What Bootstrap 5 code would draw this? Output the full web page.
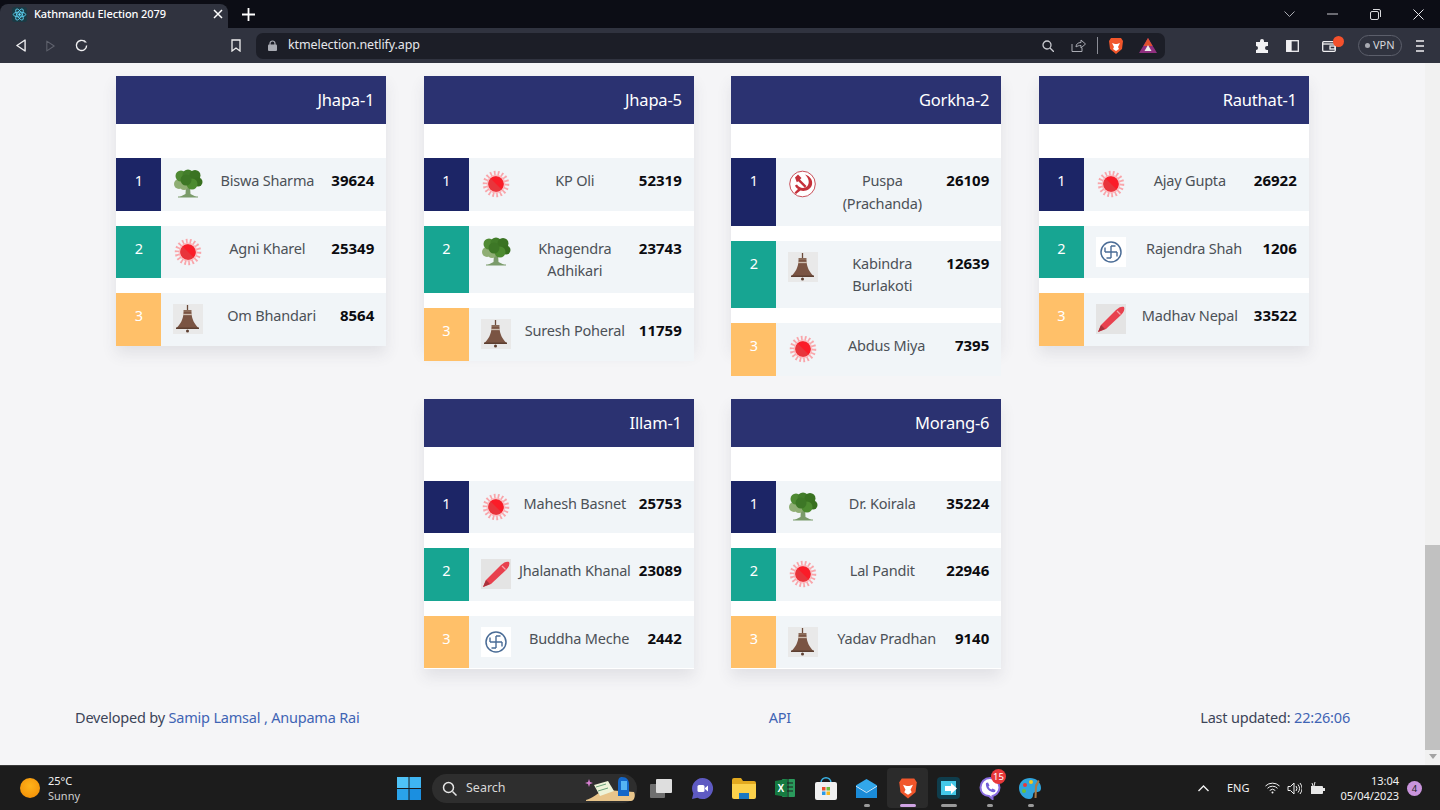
<!DOCTYPE html>
<html lang="en">
<head>
  <meta charset="UTF-8" />
  <meta name="viewport" content="width=device-width, initial-scale=1" />
  <title>Kathmandu Election 2079</title>
  <link href="https://cdn.jsdelivr.net/npm/bootstrap@5.3.3/dist/css/bootstrap.min.css" rel="stylesheet" />
  <style>
    html, body { height: 810px; overflow: hidden; }
    body { font-family: "Noto Sans", "Liberation Sans", sans-serif; font-size: 14.5px; letter-spacing: -.2px; background: #f5f5f7; }
    .win { height: 810px; }

    /* browser chrome */
    .tabbar { height: 28px; background: #0c0d15; color: #fff; }
    .tab-active { width: 228px; height: 24px; margin-top: 4px; padding: 0 5px 4px 12px; background: #30333f; border-radius: 8px 8px 0 0; font-size: 11px; font-weight: 500; letter-spacing: -.1px; }
    .tab-title { margin-left: 7px; }
    .tab-add { margin-left: 14px; }
    .win-btns { margin-left: auto; padding-right: 16px; gap: 32px; }
    .toolbar { height: 35px; background: #30333f; padding-left: 16px; }
    .tb-forward, .tb-reload { margin-left: 20px; }
    .tb-bookmark { margin-left: 143px; }
    .urlbar { width: 909px; height: 26px; margin-left: 15px; padding: 0 8px 0 12px; background: #1c1e27; border-radius: 7px; color: #e6e6ea; font-size: 12.5px; letter-spacing: -.1px; }
    .url-text { margin-left: 11px; }
    .url-share { margin-left: 17px; }
    .url-sep { width: 1px; height: 17px; margin: 0 10px 0 11px; background: #8b8d96; }
    .url-bat { margin-left: 15px; }
    .tb-ext { margin-left: 90px; }
    .tb-side { margin-left: 17px; }
    .tb-wallet { margin-left: 23px; line-height: 0; }
    .wallet-dot { top: -4px; right: -8px; width: 11px; height: 11px; border-radius: 50%; background: #f4512c; }
    .vpn-pill { height: 21px; margin-left: 22px; padding: 0 6px; border: 1px solid #5c5f6b; border-radius: 11px; color: #d6d7dc; font-size: 11px; gap: 3px; letter-spacing: 0; }
    .vpn-dot { width: 5px; height: 5px; border-radius: 50%; background: #a9abb3; }
    .tb-menu { margin-left: 13px; }

    /* page */
    .viewport { height: 702px; min-height: 0; }
    .sheet { min-width: 0; padding-top: 13px; }
    .seat-grid { width: 1193px; gap: 52.5px 37.5px; }
    .seat-box { width: 270px; height: 270px; background: #fff; box-shadow: 0 8px 14px rgba(60, 60, 80, .1); }
    .seat-head { height: 48px; padding: 0 12px; background: #2b3271; color: #fff; font-size: 16.5px; line-height: 48px; text-align: right; margin-bottom: 34px; }
    .cand-row { background: #f1f5f8; margin-bottom: 15px; }
    .cand-rank { width: 45px; flex: none; padding-top: 11.25px; padding-bottom: 11.25px; color: #fff; text-align: center; line-height: 22.5px; }
    .rank-1 { background: #1c2566; }
    .rank-2 { background: #17a592; }
    .rank-3 { background: #ffc069; }
    .cand-sym { width: 30px; height: 30px; flex: none; margin: 11.25px 0 11.25px 12px; }
    .cand-name { flex: 1 1 0; min-width: 0; padding: 11.25px 6px; color: #4c5157; text-align: center; line-height: 22.5px; }
    .cand-votes { flex: none; padding: 11.25px 12px 11.25px 0; color: #0b0b0f; font-size: 15px; font-weight: 700; letter-spacing: 0; line-height: 22.5px; }
    .foot-line { margin-top: 37.5px; padding: 0 75px; color: #3c4458; line-height: 22.5px; }
    .foot-line a { color: #3f64b4; text-decoration: none; }

    .scroll-rail { width: 15px; flex: none; background: #f1f1f1; }
    .scroll-thumb { height: 205px; margin-top: 482px; background: #c1c1c1; }
    .scroll-down { margin: 4px auto 0; width: 0; height: 0; border: 4px solid transparent; border-top: 5px solid #a3a3a3; border-bottom: 0; }

    /* taskbar */
    .taskbar { height: 45px; background: #1c1c1c; border-top: 1px solid #3a3a3a; color: #f2f2f2; letter-spacing: 0; }
    .weather { left: 20px; top: 7px; font-size: 11px; line-height: 15px; }
    .weather-ball { width: 20px; height: 20px; border-radius: 50%; background: radial-gradient(circle at 50% 40%, #ffb31a, #f08a05); margin-right: 8px; }
    .weather-sub { color: #cfcfcf; }
    .task-center { margin-left: 397px; }
    .task-slot { width: 41px; height: 40px; }
    .task-slot.on { background: #2b2b2b; border-radius: 4px; }
    .task-mark { bottom: 1px; left: 50%; width: 6px; height: 3px; margin-left: -3px; background: #9a9a9a; border-radius: 2px; }
    .task-mark.live { width: 16px; margin-left: -8px; background: #d0a4e4; }
    .task-mark.wide { width: 16px; margin-left: -8px; }
    .search-pill { width: 205px; height: 29px; margin: 0 4px 0 11px; padding-left: 10px; background: #2e2e2e; border-radius: 15px; color: #d8d8d8; font-size: 12.5px; }
    .search-word { margin-left: 9px; }
    .search-art { top: -1px; right: 0; }
    .viber-count { top: 1px; left: 22px; min-width: 15px; height: 15px; padding: 0 2px; background: #e8383a; border-radius: 8px; font-size: 9.5px; line-height: 15px; text-align: center; color: #fff; }
    .tray { right: 0; top: 0; height: 44px; font-size: 11px; padding-right: 18px; }
    .tray-eng { margin: 0 16px 0 18px; }
    .tray-speaker { margin-left: 7px; }
    .tray-batt { margin-left: 8px; }
    .tray-clock { margin: 0 8px 0 15px; line-height: 15px; text-align: right; }
    .notif { width: 15px; height: 15px; border-radius: 50%; background: #c994dc; color: #222; font-size: 9.5px; line-height: 15px; text-align: center; }
  </style>
</head>
<body>
  <svg width="0" height="0" class="position-absolute">
    <defs>
      <symbol id="sym-tree" viewBox="0 0 30 30">
        <rect width="30" height="30" fill="#f1f5f8"/>
        <path d="M13 17l-.5 8-6 3h17l-6-3-.5-8z" fill="#7b9b6b"/>
        <path d="M5 28h20" stroke="#7b9b6b"/>
        <circle cx="6" cy="15" r="5" fill="#8fae74"/>
        <circle cx="11" cy="17" r="4" fill="#8fae74"/>
        <circle cx="8" cy="7" r="5.5" fill="#4f8a33"/>
        <circle cx="15" cy="6" r="5.5" fill="#427d2a"/>
        <circle cx="22" cy="6.500" r="5.500" fill="#3a7322"/>
        <circle cx="25" cy="13" r="4.500" fill="#38701f"/>
        <circle cx="19" cy="15" r="5.500" fill="#4d8b30"/>
        <circle cx="13" cy="11" r="5.500" fill="#3d7726"/>
      </symbol>
      <symbol id="sym-sun" viewBox="0 0 30 30">
        <rect width="30" height="30" fill="#f1f5f8"/>
        <circle cx="15" cy="15" r="9.500" fill="#fbc2c6"/>
        <circle cx="15" cy="15" r="11" fill="none" stroke="#f9a5aa" stroke-width="4.500" stroke-dasharray="1.700 2.100"/>
        <circle cx="15" cy="15" r="7.800" fill="#ee2f36"/>
        <path d="M9.500 9.500a7.800 7.800 0 0 1 11 11z" fill="#fb1c28"/>
        <path d="M9.500 9.500a7.800 7.800 0 0 0 11 11z" fill="#e8353c"/>
      </symbol>
      <symbol id="sym-bell" viewBox="0 0 30 30">
        <rect width="30" height="30" fill="#e9e9e9"/>
        <path d="M14.500 1v6" stroke="#6b4a3a" stroke-width="1.300"/>
        <path d="M10.500 6h8v2h-8z" fill="#8a6a58"/>
        <path d="M10.500 8c0 7-3 12-7 16h22c-4-4-7-9-7-16z" fill="#7a5443"/>
        <path d="M10 10.500h9" stroke="#cdbcae" stroke-width="1.300"/>
        <path d="M3 23.500h23v1.500H3z" fill="#5d3f31"/>
        <circle cx="14.500" cy="27" r="1.500" fill="#5d3f31"/>
      </symbol>
      <symbol id="sym-sickle" viewBox="0 0 30 30">
        <rect width="30" height="30" fill="#f1f5f8"/>
        <circle cx="14.500" cy="15" r="12.800" fill="#fff" stroke="#c9505a" stroke-width="1"/>
        <path d="M17 5.500c5 1.500 8 5.500 7 10-1 5-7 7.500-11.500 6L8 25l-1.500-1.500L10 20c-1.500-1-2.500-2-3-3.500l2-1c2 3.500 7 4.500 10 2 3-3 2-8.500-2-12z" fill="#c5303a"/>
        <path d="M7 8.500L10 5.500l3.500 3.500-1.500 1.500 6.500 6.500-1.700 1.700-6.500-6.500-1.500 1z" fill="#c5303a"/>
      </symbol>
      <symbol id="sym-wheel" viewBox="0 0 30 30">
        <rect width="30" height="30" fill="#fff"/>
        <circle cx="15" cy="15" r="10" fill="none" stroke="#4a6c96" stroke-width="1.500"/>
        <path d="M15 9v12M9 15h12M15 9h4.500M15 21h-4.500M9 15V10.500M21 15v4.500" fill="none" stroke="#4a6c96" stroke-width="1.400"/>
      </symbol>
      <symbol id="sym-pen" viewBox="0 0 30 30">
        <rect width="30" height="30" fill="#e4e4e4"/>
        <path d="M2 28l3-7L20 6c3-3 6-4 8-3 1 2 0 5-3 8L10 25z" fill="#e8414e"/>
        <path d="M21 7l3.500 3.500" stroke="#f6a3aa" stroke-width="1.200"/>
        <path d="M2 28l3-7 4 4z" fill="#a8323c"/>
      </symbol>
    </defs>
  </svg>

  <div class="win d-flex flex-column">
    <div class="tabbar d-flex align-items-start">
      <div class="tab-active d-flex align-items-center">
        <svg width="15" height="15" viewBox="0 0 24 24" fill="none" stroke="#61dafb" stroke-width="1.300"><rect width="24" height="24" rx="4" fill="#1b3a44" stroke="none"/><ellipse cx="12" cy="12" rx="10" ry="4"/><ellipse cx="12" cy="12" rx="10" ry="4" transform="rotate(60 12 12)"/><ellipse cx="12" cy="12" rx="10" ry="4" transform="rotate(120 12 12)"/><circle cx="12" cy="12" r="1.500" fill="#61dafb"/></svg>
        <span class="tab-title flex-grow-1">Kathmandu Election 2079</span>
        <svg width="10" height="10" viewBox="0 0 10 10" stroke="#fff" stroke-width="1.500"><path d="M1 1l8 8M9 1l-8 8"/></svg>
      </div>
      <svg class="tab-add mt-2" width="13" height="13" viewBox="0 0 13 13" stroke="#fff" stroke-width="1.800"><path d="M6.500 0v13M0 6.500h13"/></svg>
      <div class="win-btns d-flex align-items-center h-100">
        <svg width="11" height="6" viewBox="0 0 11 6" fill="none" stroke="#a9aab2"><path d="M.5.500l5 5 5-5"/></svg>
        <svg width="11" height="2" viewBox="0 0 11 2" stroke="#c9c9cf"><path d="M0 1h11"/></svg>
        <svg width="11" height="11" viewBox="0 0 11 11" fill="none" stroke="#d8d8dc"><rect x=".5" y="2.500" width="8" height="8" rx="1.500"/><path d="M3 .5h6a1.500 1.500 0 0 1 1.500 1.500v6"/></svg>
        <svg width="11" height="11" viewBox="0 0 11 11" stroke="#e8e8ec"><path d="M.5.500l10 10M10.500.5l-10 10"/></svg>
      </div>
    </div>

    <div class="toolbar d-flex align-items-center">
      <svg width="10" height="13" viewBox="0 0 11 14" fill="none" stroke="#f0f0f2" stroke-width="1.500"><path d="M10 1v12L1 7z" stroke-linejoin="round"/></svg>
      <svg class="tb-forward" width="9" height="12" viewBox="0 0 11 14" fill="none" stroke="#5f626d" stroke-width="1.300"><path d="M1 1v12l9-6z" stroke-linejoin="round"/></svg>
      <svg class="tb-reload" width="13" height="13" viewBox="0 0 14 14" fill="none" stroke="#f0f0f2" stroke-width="1.500"><path d="M12.500 7a5.500 5.500 0 1 1-2-4.300"/><path d="M10 .8v3h2.800z" fill="#f0f0f2" stroke="none"/></svg>
      <svg class="tb-bookmark" width="10" height="13" viewBox="0 0 10 13" fill="none" stroke="#eee" stroke-width="1.300"><path d="M1 1h8v11L5 9l-4 3z"/></svg>
      <div class="urlbar d-flex align-items-center">
        <svg width="9" height="11" viewBox="0 0 9 11"><path d="M2 5V3.500a2.500 2.500 0 0 1 5 0V5" fill="none" stroke="#a9abb3" stroke-width="1.200"/><rect y="4.500" width="9" height="6.500" rx="1" fill="#a9abb3"/></svg>
        <span class="url-text flex-grow-1">ktmelection.netlify.app</span>
        <svg width="12" height="12" viewBox="0 0 12 12" fill="none" stroke="#c9cad0" stroke-width="1.300"><circle cx="5" cy="5" r="4"/><path d="M8 8l4 4"/></svg>
        <svg class="url-share" width="15" height="13" viewBox="0 0 15 13" fill="none" stroke="#a9abb3"><path d="M1 5v7.500h10V9"/><path d="M5 8c0-3 2-4.500 5-4.500V1l4.500 4L10 9V6.500C8 6.500 6 7 5 8z"/></svg>
        <span class="url-sep"></span>
        <svg width="16" height="18" viewBox="0 0 16 18"><path d="M3 1h10l2 3-1 8-6 5-6-5L1 4z" fill="#f1562b"/><path d="M4 6l3 1h2l3-1-2 4 1 2-3 2-3-2 1-2z" fill="#fff"/></svg>
        <svg class="url-bat" width="18" height="15" viewBox="0 0 18 15"><path d="M9 0l9 15H0z" fill="#8f2f7f"/><path d="M9 0l4.500 8h-9z" fill="#e0502f"/><path d="M9 7l3.500 6h-7z" fill="#eee"/></svg>
      </div>
      <svg class="tb-ext" width="14" height="14" viewBox="0 0 14 14" fill="#f2f2f4"><path d="M5 2a2 2 0 0 1 4 0v1h4v4h-1a2 2 0 0 0 0 4h1v3H1v-3a2 2 0 0 0 0-4V3h4z"/></svg>
      <svg class="tb-side" width="13" height="12" viewBox="0 0 13 12" fill="none" stroke="#f0f0f2" stroke-width="1.300"><rect x=".7" y=".7" width="11.600" height="10.600"/><path d="M1 1h4v10H1z" fill="#f0f0f2"/></svg>
      <div class="tb-wallet position-relative">
        <svg width="14" height="12" viewBox="0 0 14 12" fill="none" stroke="#f0f0f2" stroke-width="1.300"><rect x=".7" y="1.700" width="12.600" height="9.600" rx="1"/><path d="M.7 4h12.600"/><rect x="8" y="6" width="5" height="3"/></svg>
        <span class="wallet-dot position-absolute"></span>
      </div>
      <div class="vpn-pill d-flex align-items-center"><span class="vpn-dot"></span>VPN</div>
      <svg class="tb-menu" width="10" height="12" viewBox="0 0 10 12" stroke="#f0f0f2" stroke-width="1.500"><path d="M1 1h8M1 6h8M1 11h8"/></svg>
    </div>

    <div class="viewport d-flex">
      <div class="sheet flex-grow-1">
        <div id="seats" class="seat-grid d-flex flex-wrap justify-content-center mx-auto"></div>
        <div class="foot-line d-flex justify-content-between">
          <div>Developed by <a href="#">Samip Lamsal , Anupama Rai</a></div>
          <div><a href="#">API</a></div>
          <div>Last updated: <a href="#">22:26:06</a></div>
        </div>
      </div>
      <div class="scroll-rail">
        <div class="scroll-thumb"></div>
        <div class="scroll-down"></div>
      </div>
    </div>

    <div class="taskbar position-relative d-flex align-items-center">
      <div class="weather position-absolute d-flex align-items-center">
        <span class="weather-ball"></span>
        <div><div>25°C</div><div class="weather-sub">Sunny</div></div>
      </div>
      <div class="task-center d-flex align-items-center">
        <svg width="24" height="23" viewBox="0 0 24 23"><path d="M0 0h11.500v11H0z" fill="#4fc3f7"/><path d="M12.500 0H24v11H12.500z" fill="#3fb5f2"/><path d="M0 12h11.500v11H0z" fill="#2aa3ea"/><path d="M12.500 12H24v11H12.500z" fill="#1b8fe0"/></svg>
        <div class="search-pill position-relative d-flex align-items-center">
          <svg width="15" height="15" viewBox="0 0 15 15" fill="none" stroke="#e6e6e6" stroke-width="1.500"><circle cx="6.500" cy="6.500" r="5"/><path d="M10.500 10.500l4 4"/></svg>
          <span class="search-word">Search</span>
          <svg class="search-art position-absolute" width="52" height="30" viewBox="0 0 52 30"><path d="M1 27c6-1 12-8 20-10l28 2c2 4 0 9-3 9H1z" fill="#e8c48a"/><path d="M9 12l14-4 6 10-14 5z" fill="#eef3d8"/><path d="M11 14l10-3M13 18l10-3" stroke="#68a078" fill="none"/><path d="M37 4c5 0 7 3 7 8v11H33V10c0-4 1-6 4-6z" fill="#1467c9"/><rect x="36" y="8" width="6" height="9" fill="#55b4f2"/><path d="M4 6l1 3 3 1-3 1-1 3-1-3-3-1 3-1z" fill="#d77fd1"/></svg>
        </div>
        <div class="task-slot d-flex align-items-center justify-content-center">
          <svg width="24" height="22" viewBox="0 0 24 22"><rect x="0" y="7" width="15" height="14" rx="1" fill="#6f6f6f"/><rect x="6" y="2" width="16" height="14" rx="1" fill="#dedede"/></svg>
        </div>
        <div class="task-slot d-flex align-items-center justify-content-center">
          <svg width="23" height="23" viewBox="0 0 23 23"><path d="M11.500 1a10.500 10.500 0 1 1-5 19.700L1 22l1.300-5.500A10.500 10.500 0 0 1 11.500 1z" fill="#5e5ac2"/><rect x="6.500" y="8" width="7" height="7" rx="1.500" fill="#fff"/><path d="M14 11l3-2.500v6L14 12z" fill="#fff"/></svg>
        </div>
        <div class="task-slot d-flex align-items-center justify-content-center">
          <svg width="24" height="21" viewBox="0 0 24 21"><path d="M0 2a2 2 0 0 1 2-2h7l2 3h11a2 2 0 0 1 2 2v14H0z" fill="#e2a91f"/><path d="M0 6h24v13a2 2 0 0 1-2 2H2a2 2 0 0 1-2-2z" fill="#fbd14b"/><rect x="7" y="15" width="10" height="6" fill="#1b78c2"/></svg>
        </div>
        <div class="task-slot d-flex align-items-center justify-content-center">
          <svg width="20" height="22" viewBox="0 0 20 22"><rect x="7" y="2" width="13" height="18" rx="1" fill="#2a9a5c"/><path d="M9 6h9M9 10h9M9 14h9M13 2v18" stroke="#1c1c1c"/><path d="M0 4l12-2v18L0 18z" fill="#157a40"/><text x="2.500" y="14.500" font-size="10" font-weight="700" fill="#fff" font-family="Liberation Sans">X</text></svg>
        </div>
        <div class="task-slot d-flex align-items-center justify-content-center">
          <svg width="22" height="23" viewBox="0 0 22 23"><path d="M6 6c0-7 10-7 10 0" fill="none" stroke="#39b4e8" stroke-width="1.500"/><rect y="5" width="22" height="18" rx="2" fill="#f0f0f0"/><path d="M7 10h3.500v3.500H7z" fill="#e8502a"/><path d="M11.500 10H15v3.500h-3.500z" fill="#6bbf3a"/><path d="M7 14.500h3.500V18H7z" fill="#2a9be8"/><path d="M11.500 14.500H15V18h-3.500z" fill="#f7b81e"/></svg>
        </div>
        <div class="task-slot position-relative d-flex align-items-center justify-content-center">
          <svg width="23" height="19" viewBox="0 0 23 21"><path d="M11.500 0L23 7v14H0V7z" fill="#32a7ea"/><path d="M0 7l11.500 7L23 7v14H0z" fill="#1a8bd8"/><path d="M0 8l11.500 7L23 8" fill="none" stroke="#e8f6ff"/></svg>
          <span class="task-mark position-absolute"></span>
        </div>
        <div class="task-slot on position-relative d-flex align-items-center justify-content-center">
          <svg width="20" height="23" viewBox="0 0 16 18"><path d="M3 1h10l2 3-1 8-6 5-6-5L1 4z" fill="#f1562b"/><path d="M4 6l3 1h2l3-1-2 4 1 2-3 2-3-2 1-2z" fill="#fff"/></svg>
          <span class="task-mark live position-absolute"></span>
        </div>
        <div class="task-slot position-relative d-flex align-items-center justify-content-center">
          <svg width="23" height="22" viewBox="0 0 23 22"><rect width="23" height="22" rx="4" fill="#0f3d4c"/><path d="M4 4h15v14H4z" fill="#43c8e8"/><path d="M8 9h6V6l6 5.500-6 5.500v-3H8z" fill="#fff"/></svg>
          <span class="task-mark wide position-absolute"></span>
        </div>
        <div class="task-slot position-relative d-flex align-items-center justify-content-center">
          <svg width="22" height="23" viewBox="0 0 22 23"><path d="M11 1a9.500 9.500 0 0 1 9.500 9.500c0 5-4.500 8-7 8.500v3l-3.500-3C5 19 1.500 15.500 1.500 10.500A9.500 9.500 0 0 1 11 1z" fill="#fff" stroke="#8a6de0" stroke-width="2"/><path d="M7 6l2-.5 1.500 3-1 1c.5 1.500 1.500 2.500 3 3l1-1 3 1.500-.5 2c-5 1-10-4-9-9z" fill="#7360d8"/></svg>
          <span class="viber-count position-absolute">15</span>
          <span class="task-mark position-absolute"></span>
        </div>
        <div class="task-slot position-relative d-flex align-items-center justify-content-center">
          <svg width="23" height="23" viewBox="0 0 23 23"><path d="M11 1c6 0 11 4 11 10 0 4-3 4-5 4s-3 1-3 3-1 4-4 4C5 22 0 17 0 11 0 5 5 1 11 1z" fill="#30a5dd"/><circle cx="6" cy="8" r="2" fill="#e8383a"/><circle cx="12" cy="5" r="2" fill="#f7c81e"/><circle cx="5" cy="14" r="2" fill="#6bbf3a"/><path d="M16 8l3-5 1.500 1L18 10l-.5 11h-2z" fill="#a97b4a"/></svg>
          <span class="task-mark position-absolute"></span>
        </div>
      </div>
      <div class="tray position-absolute d-flex align-items-center">
        <svg width="11" height="7" viewBox="0 0 11 7" fill="none" stroke="#f2f2f2" stroke-width="1.400"><path d="M.5 6l5-5 5 5"/></svg>
        <span class="tray-eng">ENG</span>
        <svg width="15" height="12" viewBox="0 0 15 12" fill="none" stroke="#f2f2f2"><path d="M.5 4a10 10 0 0 1 14 0M2.500 6.300a7 7 0 0 1 10 0M4.700 8.500a4 4 0 0 1 5.600 0"/><circle cx="7.500" cy="10.500" r="1" fill="#f2f2f2" stroke="none"/></svg>
        <svg class="tray-speaker" width="15" height="13" viewBox="0 0 15 13" fill="none" stroke="#f2f2f2"><path d="M1 4.500h2.500L7 1v11L3.500 8.500H1z"/><path d="M9 4a4 4 0 0 1 0 5M11 2.500a6.500 6.500 0 0 1 0 8M13 1a9 9 0 0 1 0 11"/></svg>
        <svg class="tray-batt" width="15" height="13" viewBox="0 0 15 13"><path d="M1 4h11a1 1 0 0 1 1 1v6a1 1 0 0 1-1 1H1z" fill="#e8e8e8"/><rect x="13" y="6" width="2" height="3" fill="#e8e8e8"/><path d="M2 1l1 3M5 0L4 4" stroke="#e8e8e8"/></svg>
        <div class="tray-clock"><div>13:04</div><div>05/04/2023</div></div>
        <span class="notif">4</span>
      </div>
    </div>
  </div>

  <script>
    const seats = [
      ["Jhapa-1", [["tree", "Biswa Sharma", 39624], ["sun", "Agni Kharel", 25349], ["bell", "Om Bhandari", 8564]]],
      ["Jhapa-5", [["sun", "KP Oli", 52319], ["tree", "Khagendra Adhikari", 23743], ["bell", "Suresh Poheral", 11759]]],
      ["Gorkha-2", [["sickle", "Puspa (Prachanda)", 26109], ["bell", "Kabindra Burlakoti", 12639], ["sun", "Abdus Miya", 7395]]],
      ["Rauthat-1", [["sun", "Ajay Gupta", 26922], ["wheel", "Rajendra Shah", 1206], ["pen", "Madhav Nepal", 33522]]],
      ["Illam-1", [["sun", "Mahesh Basnet", 25753], ["pen", "Jhalanath Khanal", 23089], ["wheel", "Buddha Meche", 2442]]],
      ["Morang-6", [["tree", "Dr. Koirala", 35224], ["sun", "Lal Pandit", 22946], ["bell", "Yadav Pradhan", 9140]]],
    ];

    document.getElementById("seats").innerHTML = seats.map(([place, cands]) => `
      <div class="seat-box">
        <div class="seat-head">${place}</div>
        ${cands.map(([sym, name, votes], i) => `
          <div class="cand-row d-flex">
            <div class="cand-rank rank-${i + 1}">${i + 1}</div>
            <svg class="cand-sym"><use href="#sym-${sym}"/></svg>
            <div class="cand-name">${name}</div>
            <div class="cand-votes">${votes}</div>
          </div>`).join("")}
      </div>`).join("");
  </script>
  <script src="https://cdn.jsdelivr.net/npm/bootstrap@5.3.3/dist/js/bootstrap.bundle.min.js"></script>
</body>
</html>
